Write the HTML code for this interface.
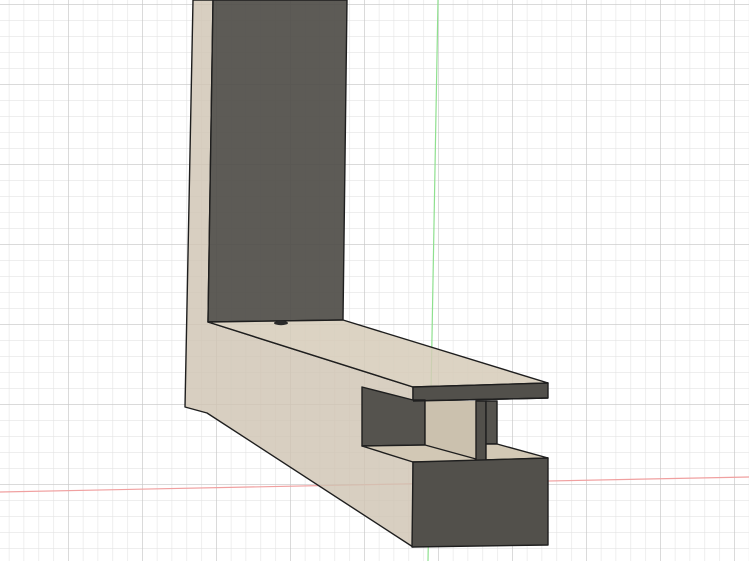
<!DOCTYPE html>
<html><head><style>html,body{margin:0;padding:0;background:#fff;overflow:hidden}</style></head>
<body>
<svg width="749" height="561" viewBox="0 0 749 561" xmlns="http://www.w3.org/2000/svg">
<defs>
<pattern id="minor" x="68" y="4" width="14.8" height="16" patternUnits="userSpaceOnUse">
<path d="M0 0V16M0 0H14.8" stroke="#e3e3e3" stroke-width="1.2" fill="none"/>
</pattern>
<pattern id="major" x="68" y="4" width="74" height="80" patternUnits="userSpaceOnUse">
<path d="M0 0V80M0 0H74" stroke="#c8c8c8" stroke-width="1.3" fill="none"/>
</pattern>
</defs>
<rect width="749" height="561" fill="#fff"/>
<rect width="749" height="561" fill="url(#minor)"/>
<rect width="749" height="561" fill="url(#major)"/>
<line x1="0" y1="492" x2="749" y2="477" stroke="#f0a0a0" stroke-width="1.2"/>
<line x1="438" y1="0" x2="428" y2="561" stroke="#8ee08e" stroke-width="1.2"/>
<g stroke="#1e1e1e" stroke-width="1.4" stroke-linejoin="round">
<polygon points="193,0 213,0 208,322 413,387 413,547 207,413 185,407" fill="#cfc5b3" fill-opacity="0.82"/>
<polygon points="213,0 347,0 343,320 208,322" fill="#4f4d48" fill-opacity="0.92"/>
<polygon points="208,322 343,320 548,383 413,387" fill="#d6cbb8" fill-opacity="0.85"/>
<polygon points="413,387 548,383 548,398 413,401" fill="#52504b"/>
<polygon points="362,387 413,400 425,400 425,445 362,446" fill="#55534e"/>
<polygon points="425,401 476,401 476,460 425,445" fill="#cbc1ae" stroke="none"/>
<line x1="425" y1="401" x2="425" y2="445"/>
<polygon points="362,446 425,445 476,459 476,462 413,462" fill="#d2c8b5"/>
<polygon points="476,401 486,401 486,462 476,462" fill="#52504b"/>
<polygon points="486,401 497,401 497,444 486,444" fill="#55534e"/>
<polygon points="486,444 497,444 548,458 486,460" fill="#d2c8b5"/>
<polygon points="413,462 548,458 548,545 412,547" fill="#52504b"/>
<line x1="413" y1="401" x2="548" y2="398"/>
</g>
<ellipse cx="281" cy="323" rx="7" ry="2.2" fill="#2a2a2a"/>
</svg>
</body></html>
